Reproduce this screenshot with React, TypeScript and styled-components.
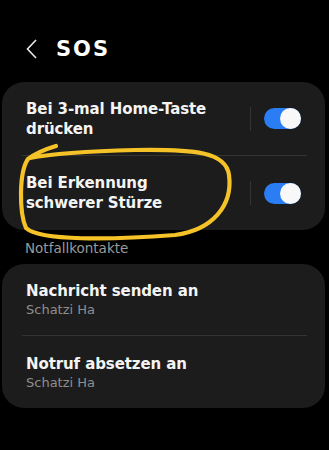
import React from "react";
import styled, { createGlobalStyle } from "styled-components";

const Global = createGlobalStyle`
  html, body { margin: 0; padding: 0; background: #000; }
  body { font-family: "DejaVu Sans", "Liberation Sans", sans-serif; }
`;

const Page = styled.div`
  position: relative;
  width: 329px;
  height: 450px;
  background: #000;
  overflow: hidden;
  padding-top: 36px;
  box-sizing: border-box;
`;

const Header = styled.div`
  display: flex;
  align-items: center;
  height: 26px;
  padding-left: 26px;
  gap: 19px;
  margin-bottom: 20px;
`;

const Title = styled.h1`
  margin: 0;
  color: #fff;
  font-size: 21px;
  font-weight: 700;
  letter-spacing: 2px;
  font-family: "DejaVu Sans", sans-serif;
`;

const Card = styled.div`
  margin: 0 4px 0 2px;
  background: #1c1c1c;
  border-radius: 22px;
  display: flex;
  flex-direction: column;
`;

const Row = styled.div<{ $h: number }>`
  height: ${(p) => p.$h}px;
  display: flex;
  align-items: center;
  padding: 0 24px 0 24px;
  box-sizing: border-box;
`;

const Divider = styled.div`
  height: 1px;
  background: #333;
  margin: 0 18px 0 20px;
`;

const TextCol = styled.div`
  flex: 1;
  display: flex;
  flex-direction: column;
`;

const RowTitle = styled.div`
  color: #f4f4f4;
  font-size: 15px;
  font-weight: 700;
  line-height: 20px;
  letter-spacing: -0.1px;
`;

const RowSub = styled.div`
  color: #8e8e8e;
  font-size: 13px;
  line-height: 16px;
  margin-top: 1px;
`;

const VSep = styled.div`
  width: 1px;
  height: 24px;
  background: #333;
  margin-right: 13px;
`;

const Track = styled.div`
  width: 37px;
  height: 21px;
  border-radius: 11px;
  background: #2a7df2;
  position: relative;
  flex: none;
`;

const Thumb = styled.div`
  position: absolute;
  right: 0;
  top: 0;
  width: 21px;
  height: 21px;
  border-radius: 50%;
  background: #f8f8f8;
`;

const SectionLabel = styled.div`
  color: #9a9a9a;
  font-size: 13.5px;
  padding: 10px 0 0 25px;
  height: 34px;
  box-sizing: border-box;
`;

const Annotation = styled.svg`
  position: absolute;
  left: 0;
  top: 0;
  pointer-events: none;
`;

const Toggle = () => (
  <>
    <VSep />
    <Track>
      <Thumb />
    </Track>
  </>
);

export default function App() {
  return (
    <>
      <Global />
      <Page>
        <Header>
          <svg width="11" height="20" viewBox="0 0 11 20">
            <path d="M10 1 L1.5 10 L10 19" stroke="#e8e8e8" strokeWidth="1.6" fill="none" />
          </svg>
          <Title>SOS</Title>
        </Header>
        <Card>
          <Row $h={73}>
            <TextCol>
              <RowTitle>Bei 3-mal Home-Taste<br />drücken</RowTitle>
            </TextCol>
            <Toggle />
          </Row>
          <Divider />
          <Row $h={74}>
            <TextCol>
              <RowTitle>Bei Erkennung<br />schwerer Stürze</RowTitle>
            </TextCol>
            <Toggle />
          </Row>
        </Card>
        <SectionLabel>Notfallkontakte</SectionLabel>
        <Card>
          <Row $h={71}>
            <TextCol>
              <RowTitle>Nachricht senden an</RowTitle>
              <RowSub>Schatzi Ha</RowSub>
            </TextCol>
          </Row>
          <Divider />
          <Row $h={72}>
            <TextCol>
              <RowTitle>Notruf absetzen an</RowTitle>
              <RowSub>Schatzi Ha</RowSub>
            </TextCol>
          </Row>
        </Card>
        <Annotation width="329" height="450" viewBox="0 0 329 450">
          <path
            d="M56 146 C46 149 36 153 28 159 C19 172 19 212 26 228 C40 241 110 240 175 235 C213 230 233 205 229 175 C226 152 195 149 135 150 C95 151 55 153 30 158"
            stroke="#f5c228"
            strokeWidth="4.2"
            fill="none"
            strokeLinecap="round"
          />
        </Annotation>
      </Page>
    </>
  );
}
